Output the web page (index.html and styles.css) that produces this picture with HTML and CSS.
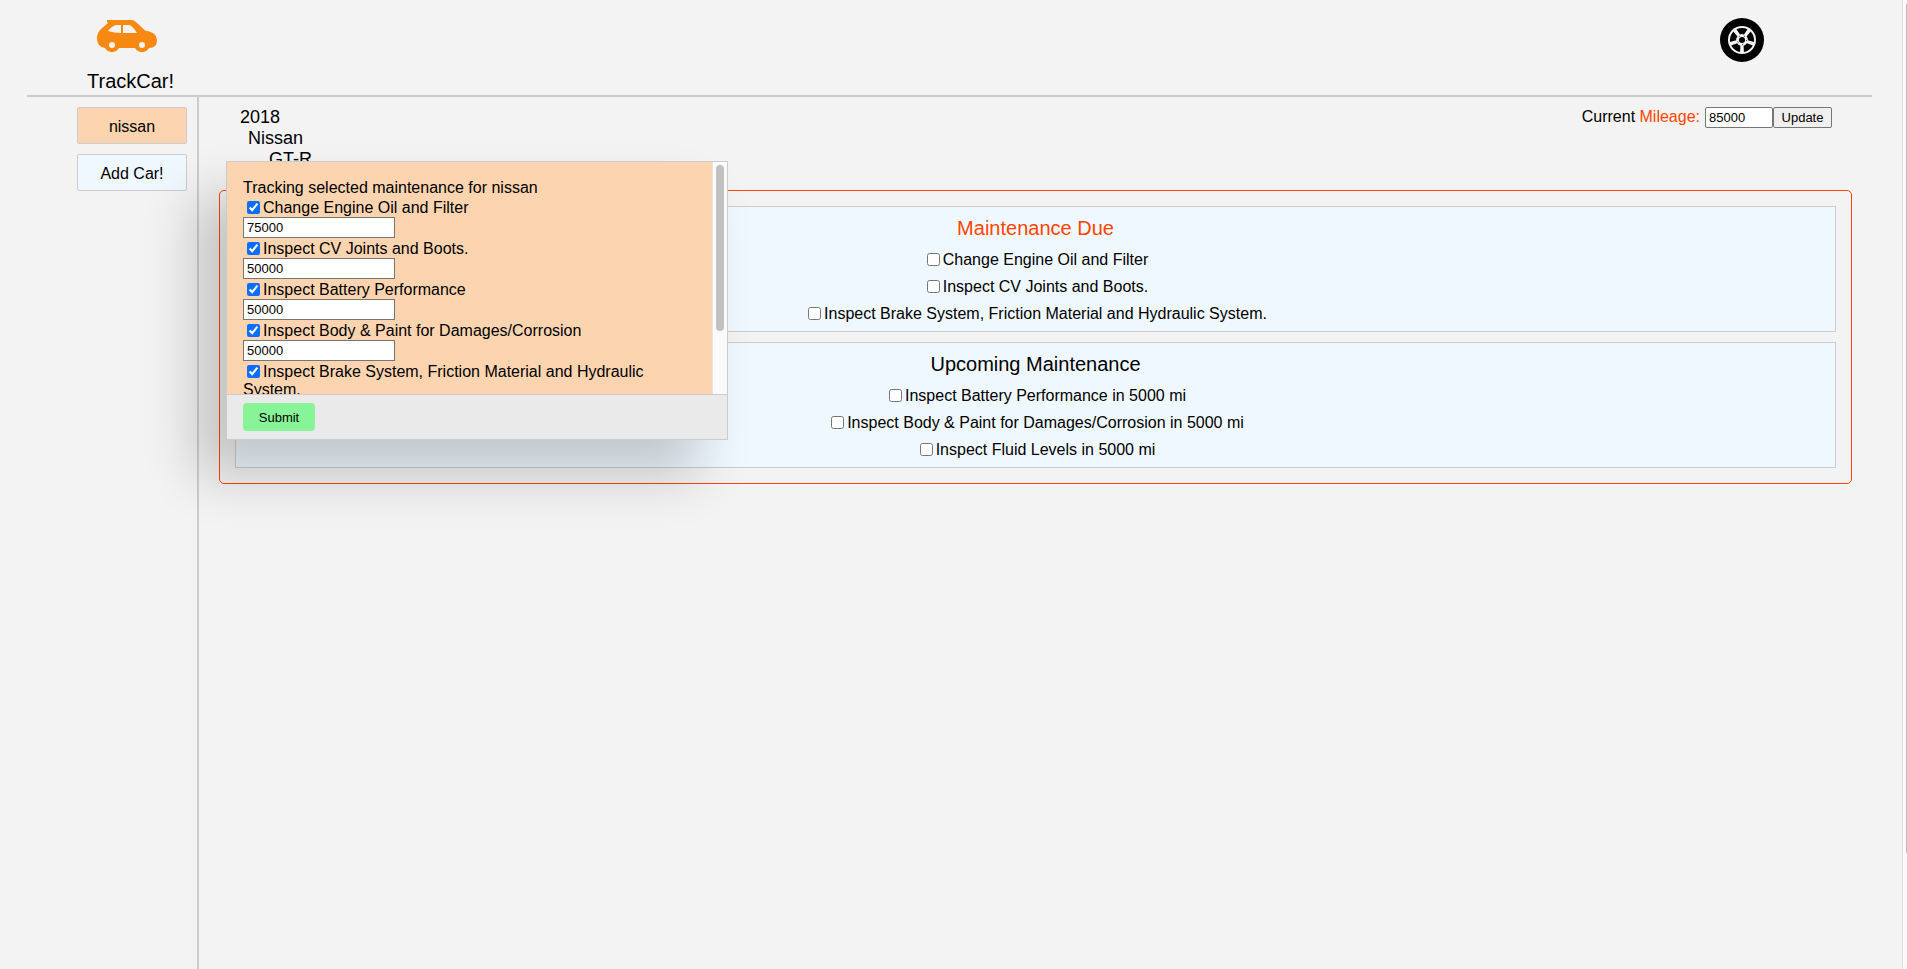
FILE: index.html
```html
<!DOCTYPE html>
<html lang="en">
<head>
<meta charset="utf-8">
<title>TrackCar!</title>
<link rel="stylesheet" href="styles.css">
</head>
<body>
<div class="page">
  <header class="header">
    <a class="brand" href="#">
      <svg class="brand-icon" viewBox="0 0 60 33" aria-hidden="true">
        <path fill="#f78812" fill-rule="evenodd" d="M10 0H34Q37 0 39 2L48 10.500Q60 12 60 20Q60 28 52 28A8 8 0 0 1 38 28H22A8 8 0 0 1 8 28Q0 27 0 18Q0 13 4 9L11 3L10 2ZM11 11Q17 13 24 13V5H19Q15 6 11 11ZM26 5V13H40Q35 5 32 5ZM15 22A3 3 0 1 0 15 28A3 3 0 1 0 15 22ZM45 22A3 3 0 1 0 45 28A3 3 0 1 0 45 22Z"/>
      </svg>
      <span>TrackCar!</span>
    </a>
    <a class="wheel" href="#" aria-label="Settings">
      <svg viewBox="0 0 44 44" aria-hidden="true">
        <circle cx="22" cy="22" r="22"/>
        <circle cx="22" cy="22" r="14" fill="#f3f3f3"/>
        <path id="w" d="M16.500 11.200Q22 8.600 27.500 11.200L24 16.500Q22 15.500 20 16.500Z"/>
        <use href="#w" transform="rotate(72 22 22)"/>
        <use href="#w" transform="rotate(144 22 22)"/>
        <use href="#w" transform="rotate(216 22 22)"/>
        <use href="#w" transform="rotate(288 22 22)"/>
        <circle cx="22" cy="22" r="3"/>
        <circle cx="22" cy="22" r="4.500" fill="none" stroke="#000" stroke-width="1" stroke-dasharray="1 4.650"/>
      </svg>
    </a>
  </header>
  <div class="columns">
    <nav class="sidebar">
      <button class="car car-active" type="button">nissan</button>
      <button class="car" type="button">Add Car!</button>
    </nav>
    <main class="main">
      <div class="summary">
        <div class="model">
          <div>2018</div>
          <div class="make">Nissan</div>
          <div class="trim">GT-R</div>
        </div>
        <form class="mileage">
          <label for="mileage">Current <span class="accent">Mileage:</span></label>
          <input id="mileage" type="text" value="85000"><button type="button">Update</button>
        </form>
      </div>
      <div class="board">
        <section class="panel">
          <h2 class="accent">Maintenance Due</h2>
          <label><input type="checkbox">Change Engine Oil and Filter</label>
          <label><input type="checkbox">Inspect CV Joints and Boots.</label>
          <label><input type="checkbox">Inspect Brake System, Friction Material and Hydraulic System.</label>
        </section>
        <section class="panel">
          <h2>Upcoming Maintenance</h2>
          <label><input type="checkbox">Inspect Battery Performance in 5000 mi</label>
          <label><input type="checkbox">Inspect Body &amp; Paint for Damages/Corrosion in 5000 mi</label>
          <label><input type="checkbox">Inspect Fluid Levels in 5000 mi</label>
        </section>
      </div>
      <form class="dialog" role="dialog" aria-label="Tracked maintenance">
        <div class="dialog-top">
          <div class="dialog-body">
            <div class="dialog-title">Tracking selected maintenance for nissan</div>
            <label><input type="checkbox" checked>Change Engine Oil and Filter</label>
            <input type="text" value="75000" aria-label="Change Engine Oil and Filter mileage">
            <label><input type="checkbox" checked>Inspect CV Joints and Boots.</label>
            <input type="text" value="50000" aria-label="Inspect CV Joints and Boots mileage">
            <label><input type="checkbox" checked>Inspect Battery Performance</label>
            <input type="text" value="50000" aria-label="Inspect Battery Performance mileage">
            <label><input type="checkbox" checked>Inspect Body &amp; Paint for Damages/Corrosion</label>
            <input type="text" value="50000" aria-label="Inspect Body and Paint mileage">
            <label><input type="checkbox" checked>Inspect Brake System, Friction Material and Hydraulic System.</label>
          </div>
          <div class="track"><div class="thumb"></div></div>
        </div>
        <div class="dialog-foot"><button type="button">Submit</button></div>
      </form>
    </main>
  </div>
</div>
<div class="page-track"><div class="page-thumb"></div></div>
</body>
</html>
```
FILE: styles.css
```css
* { box-sizing: border-box; }
body {
  margin: 0;
  height: 100vh;
  display: flex;
  overflow: hidden;
  background: #f3f3f3;
  color: #000;
  font-family: "Liberation Sans", Arial, sans-serif;
  font-size: 16px;
  line-height: 18px;
}
.page { flex: 1; display: flex; flex-direction: column; padding: 0 30px 0 27px; }
.header {
  display: flex;
  justify-content: space-between;
  height: 97px;
  padding: 18px 108px 0 60px;
  border-bottom: 2px solid #ccc;
}
.brand {
  display: flex;
  flex-direction: column;
  align-items: center;
  gap: 16px;
  color: #000;
  font-size: 20px;
  line-height: 24px;
  text-decoration: none;
}
.brand-icon { width: 60px; height: 33px; margin-top: 2px; margin-right: 7px; }
.wheel svg { display: block; width: 44px; height: 44px; }
.columns { flex: 1; display: flex; }
.sidebar {
  display: flex;
  flex-direction: column;
  gap: 10px;
  width: 172px;
  padding: 10px 10px 0 50px;
  border-right: 2px solid #ccc;
}
.car {
  height: 37px;
  padding: 2px 0 0;
  border: 1px solid #ccc;
  border-radius: 2px;
  background: aliceblue;
  color: #000;
  font: inherit;
}
.car-active { background: #fcd5b0; }
.main { position: relative; flex: 1; padding: 10px 20px 0; }
.summary { display: flex; justify-content: space-between; height: 83px; padding: 0 20px 0 21px; }
.model { line-height: 21px; font-size: 18px; }
.make { padding-left: 8px; }
.trim { padding-left: 29px; }
.mileage { display: flex; align-items: flex-start; }
.mileage label { margin-right: 5px; line-height: 20px; white-space: nowrap; }
.accent { color: orangered; }
.mileage input { width: 68px; }
.mileage input, .mileage button {
  height: 21px;
  border: 1px solid #767676;
  border-radius: 2px;
  padding: 1px 3px;
  font: 13px "Liberation Sans", Arial, sans-serif;
  color: #000;
}
.mileage button { width: 59px; background: #efefef; }
.board {
  display: flex;
  flex-direction: column;
  gap: 10px;
  padding: 15px;
  border: 1px solid orangered;
  border-radius: 5px;
}
.panel {
  display: flex;
  flex-direction: column;
  align-items: center;
  gap: 9px;
  padding: 9px 10px 8px;
  border: 1px solid #ccc;
  background: aliceblue;
}
.panel h2 { margin: 0 0 2px; font-size: 20px; font-weight: normal; line-height: 24px; }
.panel label { display: flex; }
input[type="checkbox"] { width: 13px; height: 13px; margin: 2px 3px 0 4px; accent-color: #0d6efd; }
.dialog {
  position: absolute;
  left: 27px;
  top: 64px;
  width: 502px;
  border: 1px solid #ccc;
  background: #eaeaea;
  box-shadow: -30px 35px 50px 0 rgba(0, 0, 0, 0.2);
}
.dialog-top { display: flex; height: 233px; border-bottom: 1px solid #ccc; }
.dialog-body { flex: 1; overflow: hidden; padding: 17px 16px 0; background: #fcd5b0; }
.dialog-title { margin-bottom: 2px; }
.dialog-body label { display: block; }
.dialog-body input[type="checkbox"] { margin-top: 0; vertical-align: -1px; }
.dialog-body input[type="text"] {
  display: block;
  width: 152px;
  height: 21px;
  margin: 0 0 2px;
  padding: 1px 3px;
  border: 1px solid #767676;
  font: 13px "Liberation Sans", Arial, sans-serif;
}
.track { width: 15px; padding: 3px 3px 0; border-left: 1px solid #e6e6e6; background: #fafafa; }
.thumb { height: 166px; border-radius: 4px; background: #c1c1c1; }
.dialog-foot { padding: 8px 16px; }
.dialog-foot button {
  display: block;
  width: 72px;
  height: 28px;
  border: 0;
  border-radius: 4px;
  background: #88f498;
  color: #000;
  font: 13px "Liberation Sans", Arial, sans-serif;
}
.page-track { width: 5px; padding: 4px 0 0 3px; border-left: 1px solid #e4e4e4; background: #fafafa; }
.page-thumb { height: 88%; border-radius: 1px 0 0 1px; background: #bbb; }
```
